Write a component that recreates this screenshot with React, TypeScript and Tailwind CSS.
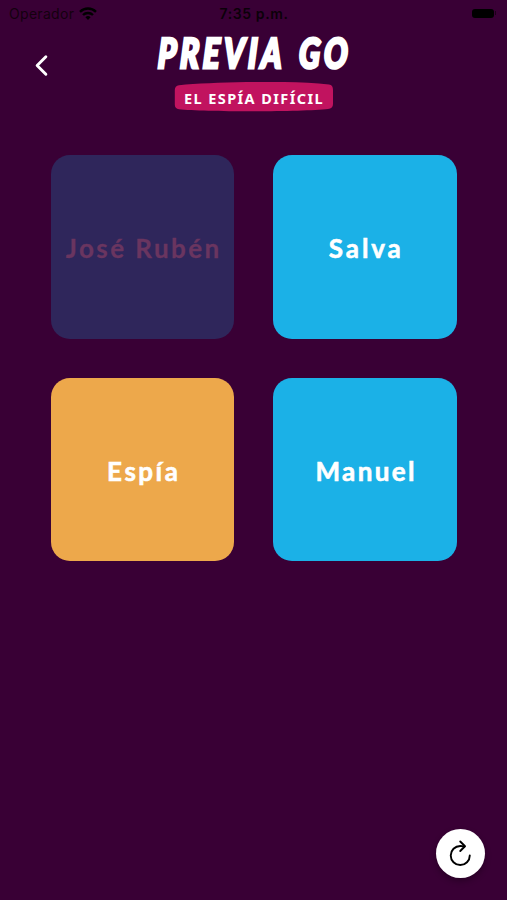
import clsx from "clsx";
import { IoChevronBack, IoRefreshOutline } from "react-icons/io5";

const players = [
  { name: "José Rubén", card: "bg-[#2f265b]", label: "text-[#6a3560] tracking-[2.45px] [-webkit-text-stroke:0.3px_#6a3560]" },
  { name: "Salva", card: "bg-[#1bb1e7]", label: "text-white tracking-[2.9px] [-webkit-text-stroke:0.6px_white]" },
  { name: "Espía", card: "bg-[#eda84b]", label: "text-white tracking-[2.5px] [-webkit-text-stroke:0.6px_white]" },
  { name: "Manuel", card: "bg-[#1bb1e7]", label: "text-white tracking-[2.4px] [-webkit-text-stroke:0.6px_white]" },
];

function StatusBar() {
  return (
    <div className="grid h-7 grid-cols-3 items-center pb-[2px] pl-[9px] pr-[11px] font-['Inter',sans-serif] text-black">
      <div className="flex items-center gap-[5px] text-[14px] tracking-[0.3px] text-[#14000f]">
        Operador
        <svg width="18" height="13" viewBox="0 0 18 13" fill="none" stroke="black" strokeWidth="2.4">
          <path d="M1 4.8a11.4 11.4 0 0 1 16 0" />
          <path d="M4 8a7.2 7.2 0 0 1 10 0" />
          <path d="M6.4 10.3a3.8 3.8 0 0 1 5.2 0L9 13z" fill="black" stroke="none" />
        </svg>
      </div>
      <span className="whitespace-nowrap pl-[3px] text-center text-[14px] font-semibold tracking-[0.6px] text-[#0b0009]">
        7:35 p.m.
      </span>
      <div className="flex items-center justify-end gap-px">
        <span className="h-[9px] w-[22px] rounded-[3px] bg-black" />
        <span className="h-1 w-px bg-[#1c0019]" />
      </div>
    </div>
  );
}

function Header() {
  return (
    <header className="grid h-[86px] grid-cols-[1fr_220px_1fr] items-start">
      <button className="ml-[26px] mt-[22px] w-fit text-white" aria-label="Atrás">
        <IoChevronBack size={31} />
      </button>
      <div className="flex flex-col items-center">
        <h1 className="mt-[4px] origin-center scale-x-[0.76] -skew-x-3 whitespace-pre pl-[4px] font-['Lato',sans-serif] text-[41px] font-black italic leading-[42px] tracking-[5.2px] text-white [word-spacing:5px] [-webkit-text-stroke:3px_white]">
          PREVIA GO
        </h1>
        <div className="relative mt-[8px] flex h-[30px] w-[160px] items-center justify-center">
          <svg className="absolute inset-0" width="160" height="30" viewBox="0 0 160 30" fill="#c1135f">
            <path d="M5 3.2C30 .8 70 -.6 110 0Q135 .3 155 2.4Q159 2.8 159 8V22Q159 26.4 154 27C128 30 30 30 5 27.2Q.8 26.8.8 22.5V8Q.8 3.8 5 3.2Z" />
          </svg>
          <span className="relative mt-px whitespace-nowrap pl-px font-['Noto_Sans',sans-serif] text-[14.5px] font-bold leading-5 tracking-[1.4px] text-white">
            EL ESPÍA DIFÍCIL
          </span>
        </div>
      </div>
    </header>
  );
}

export default function App() {
  return (
    <div className="flex h-[900px] w-[507px] flex-col overflow-hidden bg-[#390035]">
      <StatusBar />
      <Header />
      <main className="mt-[41px] grid grid-cols-[183.5px_183.5px] justify-center gap-[39px]">
        {players.map((player) => (
          <button
            key={player.name}
            className={clsx("flex h-[183.5px] items-center justify-center rounded-[19px]", player.card)}
          >
            <span
              className={clsx(
                "mt-[3px] whitespace-nowrap pl-[3px] font-['Lato',sans-serif] text-[26px] font-bold leading-8",
                player.label,
              )}
            >
              {player.name}
            </span>
          </button>
        ))}
      </main>
      <footer className="mt-auto flex justify-end pb-[22px] pr-[22px]">
        <button
          className="flex size-[49px] items-center justify-center rounded-full bg-white text-black shadow-[0_3px_6px_rgba(0,0,0,0.3)]"
          aria-label="Reiniciar"
        >
          <IoRefreshOutline size={30.5} />
        </button>
      </footer>
    </div>
  );
}
